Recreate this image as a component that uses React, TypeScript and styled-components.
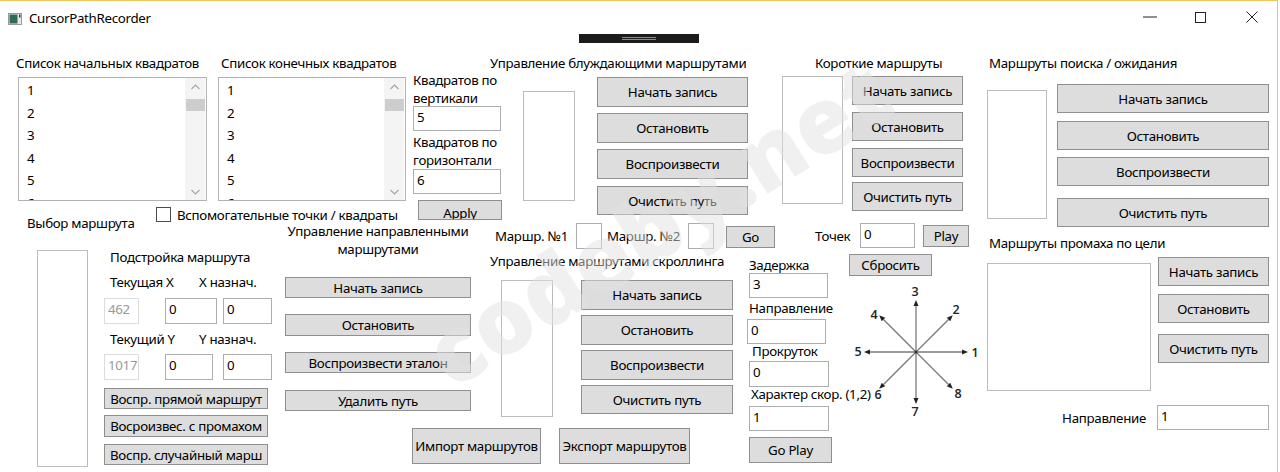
import React from 'react';
import styled, { createGlobalStyle } from 'styled-components';

const GlobalStyle = createGlobalStyle`
  html, body {
    margin: 0;
    padding: 0;
    background: #fff;
  }
  body {
    font-family: 'Noto Sans', 'Open Sans', sans-serif;
    font-size: 13.3px;
    letter-spacing: -0.3px;
    color: #000;
  }
`;

const Window = styled.div`
  position: relative;
  width: 1277px;
  height: 471px;
  border-top: 1px solid #f1c550;
  border-right: 1px solid #f1c550;
  background: #fff;
  overflow: hidden;
`;

const TitleBar = styled.div`
  display: flex;
  align-items: center;
  height: 35px;
  padding-left: 8px;
`;

const TitleText = styled.span`
  margin-left: 7px;
  font-size: 13.3px;
  line-height: 18px;
  margin-top: -1px;
`;

const WinButtons = styled.div`
  display: flex;
  margin-left: auto;
  align-self: stretch;
`;

const WinButton = styled.div`
  width: 51px;
  display: flex;
  align-items: center;
  justify-content: center;
  padding-bottom: 3px;
`;

const DragHandle = styled.div`
  position: absolute;
  left: 579px;
  top: 33px;
  width: 120px;
  height: 9px;
  background: #1b1b1b;
  display: flex;
  flex-direction: column;
  align-items: center;
  justify-content: center;
  gap: 1px;

  & > i {
    display: block;
    width: 34px;
    height: 1px;
    background: #8a8a8a;
  }
`;

const Body = styled.div`
  position: relative;
  padding-left: 16px;
  padding-top: 5px;
`;

const Band = styled.div<{ $h: number }>`
  display: flex;
  align-items: flex-start;
  height: ${(p) => p.$h}px;
`;

const Col = styled.div<{ $w?: number; $ml?: number; $mt?: number }>`
  display: flex;
  flex-direction: column;
  align-items: flex-start;
  flex: none;
  ${(p) => (p.$w !== undefined ? `width: ${p.$w}px;` : '')}
  margin-left: ${(p) => p.$ml ?? 0}px;
  margin-top: ${(p) => p.$mt ?? 0}px;
`;

const Row = styled.div<{ $ml?: number; $mt?: number; $h?: number; $center?: boolean; $end?: boolean }>`
  display: flex;
  align-items: ${(p) => (p.$center ? 'center' : 'flex-start')};
  justify-content: ${(p) => (p.$end ? 'flex-end' : 'flex-start')};
  align-self: stretch;
  flex: none;
  margin-left: ${(p) => p.$ml ?? 0}px;
  margin-top: ${(p) => p.$mt ?? 0}px;
  ${(p) => (p.$h ? `height: ${p.$h}px;` : '')}
`;

const Label = styled.div<{ $ml?: number; $mt?: number; $w?: number; $center?: boolean; $mr?: number }>`
  line-height: 18px;
  white-space: nowrap;
  flex: none;
  margin-left: ${(p) => p.$ml ?? 0}px;
  margin-top: ${(p) => p.$mt ?? 0}px;
  margin-right: ${(p) => p.$mr ?? 0}px;
  ${(p) => (p.$w ? `width: ${p.$w}px;` : '')}
  ${(p) => (p.$center ? 'text-align: center; align-self: stretch;' : '')}
`;

const TextBox = styled.div<{ $w: number; $h?: number; $ml?: number; $mt?: number; $disabled?: boolean }>`
  box-sizing: border-box;
  flex: none;
  width: ${(p) => p.$w}px;
  height: ${(p) => p.$h ?? 25}px;
  margin-left: ${(p) => p.$ml ?? 0}px;
  margin-top: ${(p) => p.$mt ?? 0}px;
  border: 1px solid ${(p) => (p.$disabled ? '#dcdcdc' : '#abadb3')};
  color: ${(p) => (p.$disabled ? '#9a9a9a' : '#000')};
  background: #fff;
  padding: 1px 0 0 3px;
  line-height: 18px;
`;

const Button = styled.div<{ $w: number; $h?: number; $ml?: number; $mt?: number; $clip?: boolean }>`
  box-sizing: border-box;
  flex: none;
  display: flex;
  align-items: ${(p) => (p.$clip ? 'flex-start' : 'center')};
  justify-content: center;
  width: ${(p) => p.$w}px;
  height: ${(p) => p.$h ?? 29}px;
  margin-left: ${(p) => p.$ml ?? 0}px;
  margin-top: ${(p) => p.$mt ?? 0}px;
  padding-top: ${(p) => (p.$clip ? 3 : 0)}px;
  background: #dddddd;
  border: 1px solid #8f8f8f;
  overflow: hidden;
  white-space: nowrap;
  line-height: 18px;
`;

const Frame = styled.div<{ $w: number; $h: number; $ml?: number; $mt?: number }>`
  box-sizing: border-box;
  flex: none;
  width: ${(p) => p.$w}px;
  height: ${(p) => p.$h}px;
  margin-left: ${(p) => p.$ml ?? 0}px;
  margin-top: ${(p) => p.$mt ?? 0}px;
  border: 1px solid #bcbcbc;
  background: #fff;
`;

const ListBox = styled.div<{ $w: number; $ml?: number }>`
  box-sizing: border-box;
  position: relative;
  display: flex;
  width: ${(p) => p.$w}px;
  height: 124px;
  margin-top: 5px;
  margin-left: ${(p) => p.$ml ?? 0}px;
  border: 1px solid #b2b2b2;
  overflow: hidden;
`;

const ListItems = styled.div`
  flex: 1;
  padding: 1px 0 0 8px;
`;

const ListItem = styled.div`
  height: 22.5px;
  line-height: 22.5px;
`;

const ScrollBar = styled.div`
  width: 20px;
  margin-right: 1px;
  background: #f4f4f4;
  display: flex;
  flex-direction: column;
  align-items: center;
`;

const ScrollArrow = styled.div`
  height: 17px;
  display: flex;
  align-items: center;
  justify-content: center;
`;

const Thumb = styled.div`
  width: 19px;
  height: 12px;
  margin-top: 4px;
  background: #cdcdcd;
`;

const Spacer = styled.div`
  flex: 1;
`;

const CheckBox = styled.div`
  box-sizing: border-box;
  width: 15px;
  height: 15px;
  border: 1px solid #4d4d4d;
  background: #fff;
  flex: none;
`;

const Watermark = styled.div`
  position: absolute;
  left: 400px;
  top: 272px;
  transform: rotate(-32deg);
  transform-origin: left top;
  font-family: 'Open Sans', sans-serif;
  font-weight: 800;
  font-size: 92px;
  line-height: normal;
  letter-spacing: 0;
  color: rgba(225, 225, 225, 0.5);
  pointer-events: none;
  white-space: nowrap;
`;

const Chevron = ({ up }: { up?: boolean }) => (
  <svg width="9" height="6" viewBox="0 0 9 6">
    <path d={up ? 'M0.5 5 L4.5 1 L8.5 5' : 'M0.5 1 L4.5 5 L8.5 1'} fill="none" stroke="#a6a6a6" strokeWidth="1.2" />
  </svg>
);

const SquareList = ({ w, ml }: { w: number; ml?: number }) => (
  <ListBox $w={w} $ml={ml}>
    <ListItems>
      {[1, 2, 3, 4, 5, 6].map((n) => (
        <ListItem key={n}>{n}</ListItem>
      ))}
    </ListItems>
    <ScrollBar>
      <ScrollArrow>
        <Chevron up />
      </ScrollArrow>
      <Thumb />
      <Spacer />
      <ScrollArrow>
        <Chevron />
      </ScrollArrow>
    </ScrollBar>
  </ListBox>
);

const compass = [
  { a: 0, n: '1', lx: 130, ly: 68 },
  { a: 45, n: '2', lx: 111, ly: 25 },
  { a: 90, n: '3', lx: 70, ly: 7 },
  { a: 135, n: '4', lx: 29, ly: 30 },
  { a: 180, n: '5', lx: 13, ly: 67 },
  { a: 225, n: '6', lx: 33, ly: 110 },
  { a: 270, n: '7', lx: 70, ly: 127 },
  { a: 315, n: '8', lx: 113, ly: 109 },
];

const Compass = () => {
  const cx = 71;
  const cy = 68;
  const r = 52;
  return (
    <svg width="140" height="140" style={{ marginTop: 8, marginLeft: -4, overflow: 'visible' }}>
      {compass.map((d) => {
        const rad = (d.a * Math.PI) / 180;
        const ex = cx + Math.cos(rad) * r;
        const ey = cy - Math.sin(rad) * r;
        const ux = Math.cos(rad);
        const uy = -Math.sin(rad);
        const bx = ex - ux * 6;
        const by = ey - uy * 6;
        const px = -uy * 2.5;
        const py = ux * 2.5;
        return (
          <g key={d.n}>
            <line x1={cx} y1={cy} x2={bx} y2={by} stroke="#7a7a7a" strokeWidth="1.3" />
            <polygon points={`${ex},${ey} ${bx + px},${by + py} ${bx - px},${by - py}`} fill="#222" />
            <text
              x={d.lx}
              y={d.ly}
              fontFamily="'Open Sans', sans-serif"
              fontSize="12.5"
              fontWeight="600"
              fill="#222"
              textAnchor="middle"
              dominantBaseline="central"
            >
              {d.n}
            </text>
          </g>
        );
      })}
      <circle cx={cx} cy={cy} r="1.5" fill="#333" />
    </svg>
  );
};

export default function App() {
  return (
    <>
      <GlobalStyle />
      <Window>
        <TitleBar>
          <svg width="14" height="12" viewBox="0 0 14 12">
            <rect x="0.5" y="0.5" width="13" height="11" fill="#e8e8e8" stroke="#9a9a9a" />
            <rect x="1.5" y="1.5" width="8" height="9" fill="#2f6b5a" />
            <rect x="11" y="1.5" width="1.5" height="3" fill="#3a3a3a" />
          </svg>
          <TitleText>CursorPathRecorder</TitleText>
          <WinButtons>
            <WinButton>
              <svg width="14" height="2">
                <rect x="0" y="0.5" width="14" height="1" fill="#222" />
              </svg>
            </WinButton>
            <WinButton>
              <svg width="11" height="11">
                <rect x="0.5" y="0.5" width="10" height="10" fill="none" stroke="#222" />
              </svg>
            </WinButton>
            <WinButton>
              <svg width="12" height="12">
                <path d="M0.5 0.5 L11.5 11.5 M11.5 0.5 L0.5 11.5" stroke="#222" strokeWidth="1" />
              </svg>
            </WinButton>
          </WinButtons>
        </TitleBar>
        <DragHandle>
          <i />
          <i />
        </DragHandle>

        <Body>
          <Band $h={166}>
            <Row>
              <Col $w={191}>
                <Label $mt={13}>Список начальных квадратов</Label>
                <SquareList w={189} ml={2} />
              </Col>
              <Col $ml={11}>
                <Label $mt={13} $ml={3}>
                  Список конечных квадратов
                </Label>
                <SquareList w={188} />
              </Col>
            </Row>

            <Col $w={89} $ml={7}>
              <Label $mt={30}>
                Квадратов по
                <br />
                вертикали
              </Label>
              <TextBox $w={88} $mt={-1}>5</TextBox>
              <Label $mt={2}>
                Квадратов по
                <br />
                горизонтали
              </Label>
              <TextBox $w={88}>6</TextBox>
              <Button $w={84} $h={20} $ml={5} $mt={6} $clip>
                Apply
              </Button>
            </Col>

            <Col $w={258} $ml={-12}>
              <Label $mt={13}>Управление блуждающими маршрутами</Label>
              <Row>
                <Frame $w={52} $h={110} $ml={33} $mt={19} />
                <Col $ml={22} $mt={5}>
                  <Button $w={151} $h={30}>Начать запись</Button>
                  <Button $w={151} $h={30} $mt={6}>Остановить</Button>
                  <Button $w={151} $h={30} $mt={6}>Воспроизвести</Button>
                  <Button $w={151} $h={29} $mt={7}>Очистить путь</Button>
                </Col>
              </Row>
            </Col>

            <Col $w={181} $ml={34}>
              <Label $mt={13} $ml={33}>
                Короткие маршруты
              </Label>
              <Row>
                <Frame $w={61} $h={128} $mt={4} />
                <Col $ml={9} $mt={4}>
                  <Button $w={111}>Начать запись</Button>
                  <Button $w={111} $mt={7}>Остановить</Button>
                  <Button $w={111} $mt={7}>Воспроизвести</Button>
                  <Button $w={111} $mt={5}>Очистить путь</Button>
                </Col>
              </Row>
            </Col>

            <Col $w={282} $ml={24}>
              <Label $mt={13} $ml={2}>
                Маршруты поиска / ожидания
              </Label>
              <Row>
                <Frame $w={60} $h={129} $mt={18} />
                <Col $ml={10} $mt={12}>
                  <Button $w={212}>Начать запись</Button>
                  <Button $w={212} $mt={8}>Остановить</Button>
                  <Button $w={212} $mt={7}>Воспроизвести</Button>
                  <Button $w={212} $mt={12}>Очистить путь</Button>
                </Col>
              </Row>
            </Col>
          </Band>

          <Band $h={266}>
            <Col $w={77} $ml={11}>
              <Label $mt={7}>Выбор маршрута</Label>
              <Frame $w={51} $h={217} $ml={10} $mt={18} />
            </Col>

            <Col $w={367}>
              <Row $ml={52} $h={15} $center>
                <CheckBox />
                <Label $ml={6}>Вспомогательные точки / квадраты</Label>
              </Row>
              <Row>
                <Col $w={168}>
                  <Label $mt={26} $ml={6}>
                    Подстройка маршрута
                  </Label>
                  <Row $mt={7}>
                    <Label $ml={6} $w={89}>
                      Текущая X
                    </Label>
                    <Label>X назнач.</Label>
                  </Row>
                  <Row $mt={7}>
                    <TextBox $w={35} $h={26} $disabled>
                      462
                    </TextBox>
                    <TextBox $w={52} $h={26} $ml={26}>
                      0
                    </TextBox>
                    <TextBox $w={49} $h={26} $ml={6}>
                      0
                    </TextBox>
                  </Row>
                  <Row $mt={6}>
                    <Label $ml={6} $w={89}>
                      Текущий Y
                    </Label>
                    <Label>Y назнач.</Label>
                  </Row>
                  <Row $mt={6}>
                    <TextBox $w={35} $h={26} $disabled>
                      1017
                    </TextBox>
                    <TextBox $w={48} $h={26} $ml={26}>
                      0
                    </TextBox>
                    <TextBox $w={49} $h={26} $ml={10}>
                      0
                    </TextBox>
                  </Row>
                  <Button $w={164} $h={21} $mt={8}>
                    Воспр. прямой маршрут
                  </Button>
                  <Button $w={164} $h={22} $mt={6}>
                    Восроизвес. с промахом
                  </Button>
                  <Button $w={164} $h={21} $mt={7}>
                    Воспр. случайный марш
                  </Button>
                </Col>

                <Col $w={186} $ml={13}>
                  <Label $center>
                    Управление направленными
                    <br />
                    маршрутами
                  </Label>
                  <Button $w={186} $h={21} $mt={19}>
                    Начать запись
                  </Button>
                  <Button $w={186} $h={22} $mt={16}>
                    Остановить
                  </Button>
                  <Button $w={186} $h={21} $mt={16}>
                    Воспроизвести эталон
                  </Button>
                  <Button $w={186} $h={21} $mt={17}>
                    Удалить путь
                  </Button>
                </Col>
              </Row>
            </Col>

            <Col $w={495} $ml={19}>
              <Row $mt={15} $h={27} $center>
                <Label $ml={5} $w={81}>
                  Маршр. №1
                </Label>
                <TextBox $w={26} $h={26} />
                <Label $ml={5} $w={81}>
                  Маршр. №2
                </Label>
                <TextBox $w={26} $h={26} />
                <Button $w={49} $h={22} $ml={12} $mt={3}>
                  Go
                </Button>
                <Label $ml={40} $w={45}>
                  Точек
                </Label>
                <TextBox $w={55} $h={25}>
                  0
                </TextBox>
                <Button $w={46} $h={22} $ml={8} $mt={1}>
                  Play
                </Button>
              </Row>
              <Row>
                <Col $w={243}>
                  <Label $mt={3}>Управление маршрутами скроллинга</Label>
                  <Row>
                    <Frame $w={52} $h={137} $ml={11} $mt={10} />
                    <Col $ml={28} $mt={10}>
                      <Button $w={152} $h={30}>Начать запись</Button>
                      <Button $w={152} $h={30} $mt={5}>Остановить</Button>
                      <Button $w={152} $h={30} $mt={5}>Воспроизвести</Button>
                      <Button $w={152} $h={29} $mt={5}>Очистить путь</Button>
                    </Col>
                  </Row>
                  <Row $ml={-78} $mt={11}>
                    <Button $w={129} $h={36}>Импорт маршрутов</Button>
                    <Button $w={131} $h={36} $ml={18}>
                      Экспорт маршрутов
                    </Button>
                  </Row>
                </Col>

                <Col $w={85} $ml={14}>
                  <Label $mt={7} $ml={2}>
                    Задержка
                  </Label>
                  <TextBox $w={79} $ml={2} $mt={-1}>
                    3
                  </TextBox>
                  <Label $mt={1} $ml={2}>
                    Направление
                  </Label>
                  <TextBox $w={79} $mt={2}>
                    0
                  </TextBox>
                  <Label $mt={-2} $ml={5}>
                    Прокруток
                  </Label>
                  <TextBox $w={80} $h={26} $ml={2} $mt={1}>
                    0
                  </TextBox>
                  <Label $mt={-2} $ml={4}>
                    Характер скор. (1,2)
                  </Label>
                  <TextBox $w={80} $ml={2} $mt={3}>
                    1
                  </TextBox>
                  <Button $w={83} $h={26} $ml={2} $mt={6}>
                    Go Play
                  </Button>
                </Col>

                <Col $w={136} $ml={17}>
                  <Button $w={83} $h={22} $mt={5}>
                    Сбросить
                  </Button>
                  <Compass />
                </Col>
              </Row>
            </Col>

            <Col $w={282} $ml={2}>
              <Label $mt={27} $ml={2}>
                Маршруты промаха по цели
              </Label>
              <Row>
                <Frame $w={164} $h={128} $mt={11} />
                <Col $ml={7} $mt={5}>
                  <Button $w={111}>Начать запись</Button>
                  <Button $w={111} $mt={8}>Остановить</Button>
                  <Button $w={111} $mt={11}>Очистить путь</Button>
                </Col>
              </Row>
              <Row $mt={14} $center $end>
                <Label $mr={11}>Направление</Label>
                <TextBox $w={112}>1</TextBox>
              </Row>
            </Col>
          </Band>

          <Watermark>codeby.net</Watermark>
        </Body>
      </Window>
    </>
  );
}
